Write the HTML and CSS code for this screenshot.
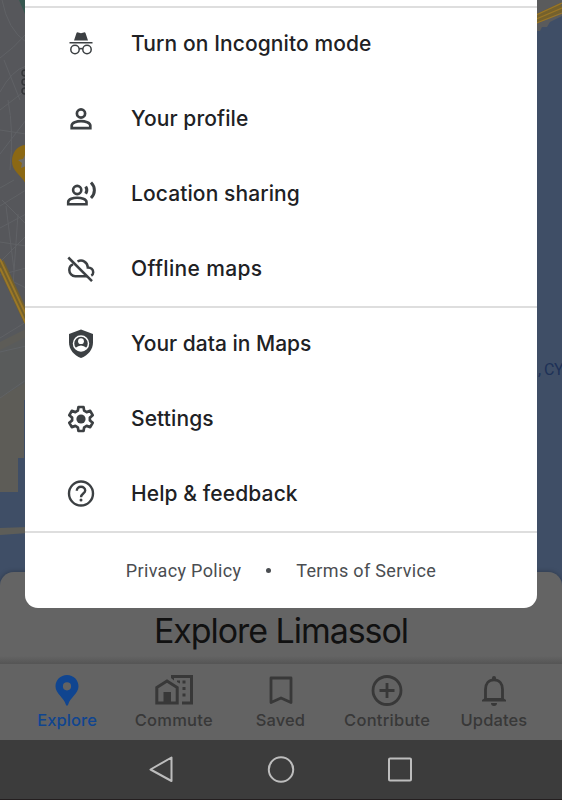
FILE: index.html
```
<!DOCTYPE html>
<html lang="en">
<head>
    <meta charset="UTF-8">
    <meta name="viewport" content="width=device-width, initial-scale=1.0">
    <title>Maps</title>
    <link rel="stylesheet" href="styles.css">
</head>
<body>
    <div class="screen">
        <!-- Map behind the menu -->
        <svg class="map" width="562" height="600" viewBox="0 0 562 600">
            <rect width="562" height="600" fill="#3f4e66"/>
            <path d="M0 0H40V400H24V458H18V492H0Z" fill="#5d5c57"/>
            <path d="M0 0H40V322L0 342Z" fill="#56585c"/>
            <path d="M0 350L40 330V375L0 397Z" fill="#595b5b"/>
            <path d="M0 0H28V310L0 280Z" fill="#56575b"/>
            <g fill="none" stroke="#606266" stroke-width="1">
                <path d="M0 58Q14 48 26 34M2 0Q8 30 26 42M0 92Q12 70 26 66M0 110L26 90M4 60L20 100M0 130L26 134M0 154L26 120M8 100Q14 130 10 170M0 188L14 180M0 206L26 190M2 200L26 224M0 228L26 214M0 242L26 246M6 206L14 270M0 262L26 236M18 214L12 300M0 275L26 268M14 282L26 288M0 338L26 322M0 352L26 346M0 398L26 380"/>
            </g>
            <path d="M19 0L25 14V0Z" fill="#365850"/>
            <path d="M0 262L28 322" stroke="#73602c" stroke-width="8"/>
            <path d="M0 259L28 319M0 268L28 328" stroke="#9b7827" stroke-width="1.8"/>
            <g fill="none" stroke="#343639" stroke-width="1.5">
                <circle cx="25" cy="73" r="3"/>
                <circle cx="25" cy="82" r="3"/>
                <circle cx="25" cy="91" r="3"/>
            </g>
            <path d="M26 145C17 145 12 153 12 161C12 171 20 174 26 184Z" fill="#8b6814"/>
            <path d="M25 155L23 159L18 160L22 163L21 168L26 166Z" fill="#6f6e6b"/>
            <path d="M0 528L28 527V533L0 535Z" fill="#5d5d58"/>
            <path d="M536 0H562V16L550 22L547 27H542L540 31H536Z" fill="#5a5b5c"/>
            <path d="M534 20L562 7" stroke="#75612c" stroke-width="9"/>
            <path d="M534 16L562 3M534 20L562 8M534 24L562 13" stroke="#9a7626" stroke-width="1.3"/>
            <text class="map-label" x="538" y="375">, CY</text>
        </svg>

        <div class="sheet">
            <h1>Explore Limassol</h1>
        </div>

        <div class="tabs">
            <div class="tab active">
                <svg width="32" height="34" viewBox="0 0 32 34">
                    <path fill="currentColor" fill-rule="evenodd" d="M16 2C9.500 2 4.500 7 4.500 13.300C4.500 21 13 24.500 14.800 31.500Q16 34 17.200 31.500C19 24.500 27.500 21 27.500 13.300C27.500 7 22.500 2 16 2ZM16 9.200A4.100 4.100 0 1 1 16 17.400A4.100 4.100 0 0 1 16 9.200Z"/>
                </svg>
                <span>Explore</span>
            </div>
            <div class="tab commute">
                <svg width="40" height="34" viewBox="0 0 40 34">
                    <g fill="none" stroke="currentColor" stroke-width="3">
                        <path d="M2.800 14.500L13 8L23.200 14.500V30H2.800Z"/>
                        <path d="M17 3.500H37.500V30H28"/>
                    </g>
                    <path fill="currentColor" d="M9.500 19H17V30H9.500ZM17 2H20V7.500L17 5ZM23 7.500H26V10.500L23 9ZM28.500 7.500H31.500V10.500H28.500ZM28.500 14H31.500V17H28.500ZM28.500 20.500H31.500V23.500H28.500Z"/>
                </svg>
                <span>Commute</span>
            </div>
            <div class="tab saved">
                <svg width="32" height="34" viewBox="0 0 32 34">
                    <path fill="none" stroke="currentColor" stroke-width="2.800" stroke-linejoin="round" d="M6 5H26V29.500L16 25L6 29.500Z"/>
                </svg>
                <span>Saved</span>
            </div>
            <div class="tab contribute">
                <svg width="34" height="34" viewBox="0 0 34 34">
                    <g fill="none" stroke="currentColor" stroke-width="2.800">
                        <circle cx="17" cy="17.500" r="14"/>
                        <path d="M9.500 17.500H24.500M17 10V25"/>
                    </g>
                </svg>
                <span>Contribute</span>
            </div>
            <div class="tab updates">
                <svg width="32" height="34" viewBox="0 0 32 34">
                    <path fill="none" stroke="currentColor" stroke-width="2.800" d="M7.500 26.500V16.500C7.500 10.500 10.800 6.800 16 6.800C21.200 6.800 24.500 10.500 24.500 16.500V26.500"/>
                    <path fill="currentColor" d="M4 28.500V27L7 25H25L28 27V28.500ZM14 8V5A2 2 0 0 1 18 5V8ZM13 30H19A3 3 0 0 1 13 30Z"/>
                </svg>
                <span>Updates</span>
            </div>
        </div>

        <div class="system-bar">
            <svg width="28" height="28" viewBox="0 0 28 28">
                <path d="M23.500 2.500V26L2.500 14.500Z"/>
            </svg>
            <svg width="28" height="28" viewBox="0 0 28 28">
                <circle cx="14" cy="14.500" r="12.200"/>
            </svg>
            <svg width="28" height="28" viewBox="0 0 28 28">
                <rect x="3" y="3.500" width="22" height="22" rx="1"/>
            </svg>
        </div>

        <!-- Account menu -->
        <div class="menu">
            <div class="menu-group">
                <div class="menu-item">
                    <svg width="32" height="32" viewBox="0 0 32 32">
                        <path fill="currentColor" d="M9 12.500L11.500 5Q12 4 13.200 4.500L16 5.200L18.800 4.500Q20 4 20.500 5L23 12.500ZM4.500 14H27.500V15.500H4.500Z"/>
                        <g fill="none" stroke="currentColor" stroke-width="1.500">
                            <circle cx="10" cy="21.500" r="4.200"/>
                            <circle cx="22" cy="21.500" r="4.200"/>
                            <path d="M14.200 21Q16 20 17.800 21"/>
                        </g>
                    </svg>
                    <span class="label incognito">Turn on Incognito mode</span>
                </div>
                <div class="menu-item">
                    <svg width="32" height="32" viewBox="0 0 32 32">
                        <g fill="none" stroke="currentColor" stroke-width="2.700">
                            <circle cx="16" cy="10.500" r="4.100"/>
                            <path d="M6.700 25.200V22.500C6.700 19.500 12 18.200 16 18.200S25.300 19.500 25.300 22.500V25.200Z"/>
                        </g>
                    </svg>
                    <span class="label profile">Your profile</span>
                </div>
                <div class="menu-item">
                    <svg width="32" height="32" viewBox="0 0 32 32">
                        <g fill="none" stroke="currentColor" stroke-width="2.600">
                            <circle cx="12.200" cy="12" r="4.100"/>
                            <path d="M3.200 26.300V24C3.200 21 8.200 19.700 12.200 19.700S21.500 21 21.500 24V26.300Z"/>
                            <path stroke-width="3" d="M20.700 8.500Q23 12 20.700 15.800M26 4.500C30.500 9 30.500 15.500 26 20"/>
                        </g>
                    </svg>
                    <span class="label sharing">Location sharing</span>
                </div>
                <div class="menu-item">
                    <svg width="32" height="32" viewBox="0 0 32 32">
                        <g fill="none" stroke="currentColor" stroke-width="2.500">
                            <path d="M3.300 4.500L27 28.200"/>
                            <path d="M8 11.400C5.500 12.300 4.300 14.700 4.300 17C4.300 20.500 7 23.200 10.200 23.200H22"/>
                            <path d="M12.500 8.500C17.500 6 22.500 9.300 22.800 14.400C25.800 14.400 28.200 16.500 28.200 19.200C28.200 20.800 27.500 22 26.300 22.700"/>
                        </g>
                    </svg>
                    <span class="label offline">Offline maps</span>
                </div>
            </div>

            <div class="menu-group">
                <div class="menu-item">
                    <svg width="32" height="32" viewBox="0 0 32 32">
                        <path fill="currentColor" d="M16 1.500L28 6V14.500C28 21.500 23 27.500 16 30C9 27.500 4 21.500 4 14.500V6Z"/>
                        <circle cx="16" cy="15.500" r="7.500" fill="none" stroke="#fff" stroke-width="1.500"/>
                        <circle cx="16" cy="13.200" r="2.900" fill="#fff"/>
                        <path fill="#fff" d="M10.200 20Q16 15 21.800 20Q19.500 22.900 16 22.900T10.200 20Z"/>
                    </svg>
                    <span class="label data">Your data in Maps</span>
                </div>
                <div class="menu-item">
                    <svg width="32" height="32" viewBox="0 0 32 32">
                        <path fill="none" stroke="currentColor" stroke-width="2.700" stroke-linejoin="round" d="M13.500 4H18.500L19.200 7.700L21.600 9.100L25.200 7.900L27.700 12.200L24.900 14.600V17.400L27.700 19.800L25.200 24.100L21.600 22.900L19.200 24.300L18.500 28H13.500L12.800 24.300L10.400 22.900L6.800 24.100L4.300 19.800L7.100 17.400V14.600L4.300 12.200L6.800 7.900L10.400 9.100L12.800 7.700Z"/>
                        <circle cx="16" cy="16" r="4.600" fill="currentColor"/>
                    </svg>
                    <span class="label settings">Settings</span>
                </div>
                <div class="menu-item">
                    <svg width="32" height="32" viewBox="0 0 32 32">
                        <g fill="none" stroke="currentColor" stroke-width="2.400">
                            <circle cx="16" cy="15.500" r="12"/>
                            <path d="M11.800 12.800C11.800 10.300 13.600 8.800 16 8.800S20.200 10.400 20.200 12.600C20.200 15.500 16 15.700 16 19.300"/>
                        </g>
                        <circle cx="16" cy="22.100" r="1.500" fill="currentColor"/>
                    </svg>
                    <span class="label help">Help &amp; feedback</span>
                </div>
            </div>

            <div class="menu-footer">
                <span class="privacy">Privacy Policy</span>
                <span class="dot"></span>
                <span class="terms">Terms of Service</span>
            </div>
        </div>
    </div>
</body>
</html>
```

FILE: styles.css
```
body {
    margin: 0;
    font-family: Inter, "Open Sans", sans-serif;
    background-color: #3c3c3c;
}
.screen {
    position: relative;
    display: flex;
    flex-direction: column;
    justify-content: flex-end;
    width: 562px;
    height: 800px;
    overflow: hidden;
}
.map {
    position: absolute;
    top: 0;
    left: 0;
}
.map-label {
    font-family: Roboto, sans-serif;
    font-size: 16px;
    letter-spacing: -0.5px;
    fill: #1d3157;
}
.sheet {
    position: relative;
    height: 92px;
    box-sizing: border-box;
    padding-top: 38px;
    border-radius: 14px 14px 0 0;
    background: linear-gradient(#646464 84px, #555 92px);
    box-shadow: 0 0 5px rgba(0, 0, 0, 0.3);
}
.sheet h1 {
    margin: 0;
    font-size: 34px;
    font-weight: 400;
    line-height: 42px;
    letter-spacing: -1.05px;
    text-align: center;
    color: #111;
}
.tabs {
    position: relative;
    display: grid;
    grid-template-columns: repeat(5, 106.7px);
    justify-content: center;
    height: 76px;
    box-sizing: border-box;
    padding-right: 1px;
    background-color: #636363;
    color: #383838;
}
.tab {
    display: flex;
    flex-direction: column;
    align-items: center;
    padding-top: 9px;
    font-size: 16.5px;
    font-weight: 500;
    line-height: 26px;
    letter-spacing: 0.1px;
    white-space: nowrap;
}
.tab.active {
    color: #104590;
}
.commute, .contribute {
    letter-spacing: 0.25px;
}
.system-bar {
    position: relative;
    display: flex;
    justify-content: center;
    gap: 91px;
    height: 60px;
    box-sizing: border-box;
    padding-top: 15px;
    border-bottom: 1px solid #241f20;
    background-color: #3c3c3c;
}
.system-bar svg {
    fill: none;
    stroke: #bdbdbd;
    stroke-width: 2;
    stroke-linejoin: round;
}
.menu {
    position: absolute;
    top: 0;
    left: 25px;
    width: 512px;
    height: 607.5px;
    box-sizing: border-box;
    padding-top: 6px;
    border-radius: 0 0 13px 13px;
    background-color: #fff;
}
.menu-group, .menu-footer {
    box-shadow: inset 0 2px #dedede;
}
.menu-item {
    display: flex;
    align-items: center;
    gap: 34px;
    height: 75px;
    padding-left: 40px;
    color: #3c4043;
}
.label {
    font-size: 21px;
    font-weight: 500;
    line-height: 30px;
    letter-spacing: 0.1px;
    white-space: nowrap;
    color: #202124;
}
.offline {
    letter-spacing: 0.35px;
}
.data {
    letter-spacing: 0;
}
.menu-footer {
    display: flex;
    align-items: center;
    justify-content: center;
    height: 76px;
    padding-top: 2px;
    box-sizing: border-box;
    font-family: Roboto, sans-serif;
    font-size: 18px;
    letter-spacing: 0.33px;
    color: #4a4d51;
}
.dot {
    width: 5px;
    height: 5px;
    margin: 0 25px;
    border-radius: 50%;
    background-color: #4a4d51;
}
```
